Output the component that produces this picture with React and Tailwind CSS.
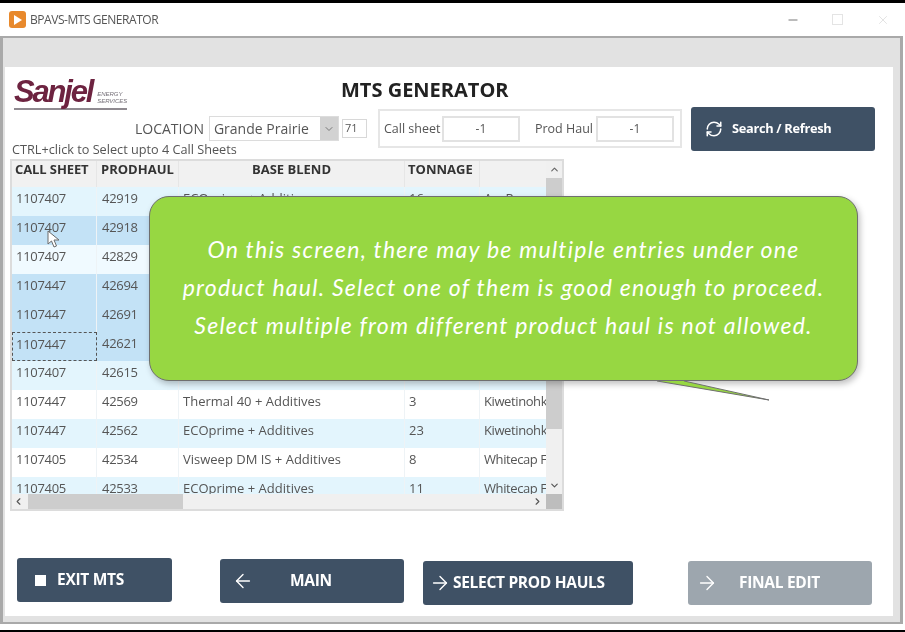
import { RefreshCw, ArrowLeft, ArrowRight, ChevronDown, ChevronUp, ChevronLeft, ChevronRight, Minus, X } from 'lucide-react';

const ROWS = [
  { callSheet: '1107407', prodHaul: '42919', blend: 'ECOprime + Additives', tonnage: '16', client: 'Arc Resour', bg: 'bg-[#e3f5fd]' },
  { callSheet: '1107407', prodHaul: '42918', bg: 'bg-[#c3e2f6]' },
  { callSheet: '1107407', prodHaul: '42829', bg: 'bg-[#f0faff]' },
  { callSheet: '1107447', prodHaul: '42694', bg: 'bg-[#c3e2f6]' },
  { callSheet: '1107447', prodHaul: '42691', bg: 'bg-[#c3e2f6]' },
  { callSheet: '1107447', prodHaul: '42621', bg: 'bg-[#c3e2f6]', focused: true },
  { callSheet: '1107407', prodHaul: '42615', bg: 'bg-[#e3f5fd]' },
  { callSheet: '1107447', prodHaul: '42569', blend: 'Thermal 40 + Additives', tonnage: '3', client: 'Kiwetinohk', bg: 'bg-white' },
  { callSheet: '1107447', prodHaul: '42562', blend: 'ECOprime + Additives', tonnage: '23', client: 'Kiwetinohk', bg: 'bg-[#e3f5fd]' },
  { callSheet: '1107405', prodHaul: '42534', blend: 'Visweep DM IS + Additives', tonnage: '8', client: 'Whitecap F', bg: 'bg-white' },
  { callSheet: '1107405', prodHaul: '42533', blend: 'ECOprime + Additives', tonnage: '11', client: 'Whitecap F', bg: 'bg-[#e3f5fd]' },
];

function TitleBar() {
  return (
    <div className="h-[33px] bg-white flex items-center shrink-0">
      <div className="ml-[9px] w-[17px] h-[17px] rounded-[3px] bg-[#e8892c] flex items-center justify-center">
        <div className="w-0 h-0 border-y-[5px] border-y-transparent border-l-[8px] border-l-white" />
      </div>
      <span className="ml-[4px] text-[12px] text-[#555] tracking-[-0.45px]">BPAVS-MTS GENERATOR</span>
      <div className="ml-auto flex items-center text-[#666]">
        <Minus size={14} strokeWidth={1.5} />
        <div className="ml-[32px] w-[11px] h-[11px] border border-[#e4e4e4]" />
        <X size={14} strokeWidth={1} className="ml-[33px] mr-[15px] text-[#cfcfcf]" />
      </div>
    </div>
  );
}

function Logo() {
  return (
    <div className="ml-[9px] mt-[10px] w-[113px] h-[33px] flex items-end border-b-2 border-[#8f8a90] pb-[1px]">
      <span className="font-['Liberation_Sans'] italic font-bold text-[31px] leading-[30px] tracking-[-2.2px] text-[#6d2340]">Sanjel</span>
      <span className="ml-[5px] mb-[2px] font-['Liberation_Sans'] italic text-[6px] leading-[7px] text-[#77727a]">ENERGY<br />SERVICES</span>
    </div>
  );
}

function TextBox({ value }) {
  return (
    <div className="w-[78px] h-[26px] bg-white border-2 border-[#e2e2e2] flex items-center justify-center text-[12px] text-[#555]">
      {value}
    </div>
  );
}

function Controls() {
  return (
    <div className="h-[39px] flex items-center ml-[130px]">
      <span className="text-[14px] text-[#555]">LOCATION</span>
      <div className="ml-[5px] w-[130px] h-[25px] border border-[#dcdcdc] flex items-center text-[14px] text-[#555]">
        <span className="ml-[4px]">Grande Prairie</span>
        <div className="ml-auto w-[18px] h-full bg-[#d2d2d2] flex items-center justify-center">
          <ChevronDown size={12} className="text-[#777]" />
        </div>
      </div>
      <div className="ml-[3px] w-[25px] h-[19px] border border-[#d8d8d8] flex items-center text-[11px] text-[#555] pl-[2px]">71</div>
      <div className="ml-[11px] w-[304px] h-[39px] border-2 border-[#e6e6e6] flex items-center text-[12.5px] text-[#555]">
        <span className="ml-[4px] w-[58px] pt-[1px]">Call sheet</span>
        <TextBox value="-1" />
        <span className="ml-[15px] w-[61px] pt-[1px]">Prod Haul</span>
        <TextBox value="-1" />
      </div>
    </div>
  );
}

function Cell({ className, children }) {
  return <div className={`h-full shrink-0 overflow-hidden whitespace-nowrap ${className}`}>{children}</div>;
}

function Table() {
  return (
    <div className="ml-[5px] w-[554px] h-[352px] border-2 border-[#dcdcdc] flex flex-col bg-white">
      <div className="flex h-[333px]">
        <div className="w-[536px] overflow-hidden text-[13px] text-[#555]">
          <div className="flex h-[26px] bg-[#f1f1f1] font-bold text-[#333] leading-[17px]">
            <Cell className="w-[85px] pl-[3px] tracking-[-0.1px] border-r border-[#e6e6e6]">CALL SHEET</Cell>
            <Cell className="w-[82px] pl-[4px] border-r border-[#e6e6e6]">PRODHAUL</Cell>
            <Cell className="w-[226px] text-center border-r border-[#e6e6e6]">BASE BLEND</Cell>
            <Cell className="w-[75px] pl-[3px] border-r border-[#e6e6e6]">TONNAGE</Cell>
            <Cell className="w-[68px]" />
          </div>
          {ROWS.map((row) => (
            <div key={row.prodHaul} className={`flex h-[29px] leading-[23px] ${row.bg}`}>
              <Cell className={row.focused
                ? 'w-[85px] pl-[3px] tracking-[-0.3px] border border-dashed border-[#555]'
                : 'w-[85px] pl-[4px] tracking-[-0.3px] border-r border-[#eef3f6]'}
              >
                {row.callSheet}
              </Cell>
              <Cell className="w-[82px] pl-[5px] tracking-[-0.3px] border-r border-[#eef3f6]">{row.prodHaul}</Cell>
              <Cell className="w-[226px] pl-[4px] border-r border-[#eef3f6]">{row.blend}</Cell>
              <Cell className="w-[75px] pl-[4px] border-r border-[#eef3f6]">{row.tonnage}</Cell>
              <Cell className="w-[68px] pl-[4px] tracking-[-0.4px]">{row.client}</Cell>
            </div>
          ))}
        </div>
        <div className="w-[16px] bg-[#f0f0f0] flex flex-col items-center">
          <ChevronUp size={11} strokeWidth={2.5} className="mt-[3px] text-[#666]" />
          <div className="mt-[3px] w-full h-[251px] bg-[#cdcdcd]" />
          <ChevronDown size={11} strokeWidth={2.5} className="mt-auto mb-[3px] text-[#555]" />
        </div>
      </div>
      <div className="flex-1 flex bg-[#f0f0f0] items-center">
        <ChevronLeft size={11} strokeWidth={2.5} className="ml-[1px] text-[#555]" />
        <div className="ml-[4px] w-[155px] h-full bg-[#cdcdcd]" />
        <ChevronRight size={11} strokeWidth={2.5} className="ml-auto mr-[3px] text-[#555]" />
        <div className="w-[16px] h-full bg-[#bdbdbd]" />
      </div>
    </div>
  );
}

function ActionButton({ className, children }) {
  return (
    <div className={`h-[44px] rounded-[3px] flex items-center text-white font-bold tracking-[-0.3px] ${className}`}>
      {children}
    </div>
  );
}

function Cursor() {
  return (
    <svg className="absolute left-[47px] top-[230px]" width="14" height="19" viewBox="0 0 14 19">
      <path d="M1 1 L1 14 L4.5 11 L7 17 L9.5 16 L7 10 L12 10 Z" fill="#fff" stroke="#6a6a6a" strokeWidth="1" />
    </svg>
  );
}

export default function App() {
  return (
    <div className="relative w-[905px] h-[632px] overflow-hidden bg-black pt-[3px] font-['Open_Sans',sans-serif]">
      <div className="h-[627px] flex flex-col bg-white blur-[0.5px]">
        <TitleBar />
        <div className="flex-1 mb-[6px] mr-[2px] flex flex-col border-t-2 border-x-[3px] border-b-2 border-[#a9a9a9] bg-[#e2e2e2]">
          <div className="h-[29px] shrink-0" />
          <div className="ml-[2px] mr-[7px] h-[549px] bg-white flex flex-col">
            <div className="flex">
              <div className="w-[679px]">
                <div className="h-[42px] flex">
                  <Logo />
                  <h1 className="ml-[214px] mt-[10px] text-[20px] font-bold text-[#222] leading-[26px] whitespace-nowrap">MTS GENERATOR</h1>
                </div>
                <Controls />
                <div className="-mt-[7px] ml-[7px] h-[18px] text-[12.7px] leading-[16px] text-[#555]">CTRL+click to Select upto 4 Call Sheets</div>
              </div>
              <ActionButton className="mt-[40px] ml-[7px] w-[184px] bg-[#3f5165] text-[12.8px]">
                <RefreshCw size={18} strokeWidth={2} className="ml-[14px]" />
                <span className="ml-[9px]">Search / Refresh</span>
              </ActionButton>
            </div>
            <Table />
            <div className="flex items-start ml-[12px] mt-[47px] text-[15.5px]">
              <ActionButton className="w-[155px] bg-[#3f5165]">
                <div className="ml-[18px] w-[11px] h-[11px] bg-white" />
                <span className="ml-[11px]">EXIT MTS</span>
              </ActionButton>
              <ActionButton className="ml-[48px] mt-[1px] w-[184px] bg-[#3f5165]">
                <ArrowLeft size={22} strokeWidth={1.5} className="ml-[12px]" />
                <span className="ml-[36px]">MAIN</span>
              </ActionButton>
              <ActionButton className="ml-[19px] mt-[3px] w-[210px] bg-[#3f5165]">
                <ArrowRight size={22} strokeWidth={1.5} className="ml-[6px]" />
                <span className="ml-[2px]">SELECT PROD HAULS</span>
              </ActionButton>
              <ActionButton className="ml-[55px] mt-[3px] w-[184px] bg-[#9da6ae]">
                <ArrowRight size={22} strokeWidth={1.5} className="ml-[8px]" />
                <span className="ml-[21px]">FINAL EDIT</span>
              </ActionButton>
            </div>
          </div>
        </div>
      </div>
      <Cursor />
      <div className="absolute left-[149px] top-[196px] w-[709px] h-[185px] rounded-[20px] bg-[#97d742] border border-[#6f6f6f] shadow-[2px_3px_6px_rgba(0,0,0,0.25)] flex flex-col items-center pt-[33px] font-['Lato',sans-serif] italic text-white text-[23px] leading-[38px] tracking-[1.24px] whitespace-nowrap">
        <p>On this screen, there may be multiple entries under one</p>
        <p>product haul. Select one of them is good enough to proceed.</p>
        <p>Select multiple from different product haul is not allowed.</p>
      </div>
      <svg className="absolute left-[655px] top-[379px]" width="116" height="24" viewBox="0 0 116 24">
        <path d="M2 2 L114 21 L29 2" fill="#97d742" stroke="#6f6f6f" strokeWidth="1" />
      </svg>
    </div>
  );
}
